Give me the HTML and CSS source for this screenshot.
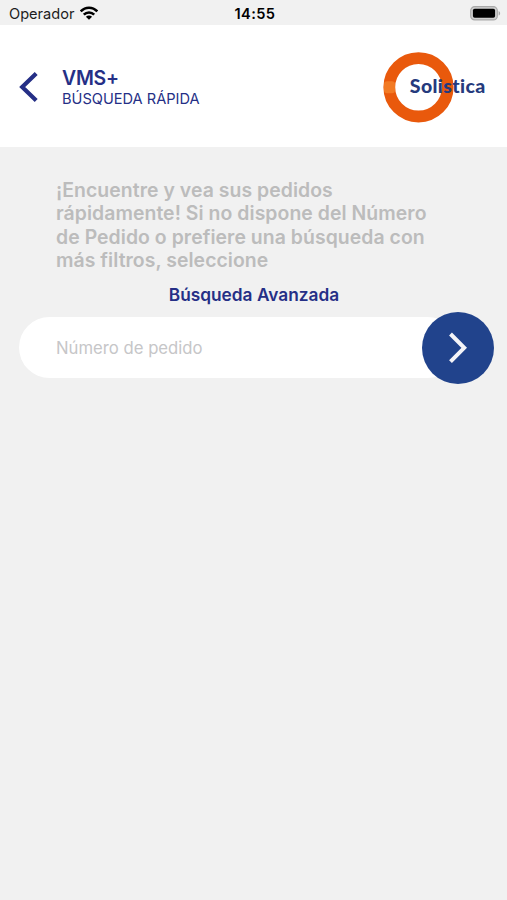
FILE: index.html
```html
<!DOCTYPE html>
<html lang="es">
<head>
  <meta charset="UTF-8">
  <meta name="viewport" content="width=device-width, initial-scale=1">
  <title>VMS+ Búsqueda rápida</title>
  <link rel="stylesheet" href="styles.css">
</head>
<body>

<!-- STATUS BAR -->
<div class="status-bar">
  <div class="carrier">
    <span>Operador</span>
    <svg class="wifi" viewBox="0 0 18 14" width="18" height="14">
      <g fill="none" stroke="#000" stroke-width="2.5">
        <path d="M0.7 5.4 C5.3 0.4 12.7 0.4 17.3 5.4"/>
        <path d="M3.8 8.7 C6.7 5.6 11.3 5.6 14.2 8.7"/>
      </g>
      <path d="M9 13.7 L5.9 10.7 C7.6 9.1 10.4 9.1 12.1 10.7 Z"/>
    </svg>
  </div>
  <div class="clock">14:55</div>
  <svg class="battery" viewBox="0 0 31 15" width="31" height="15">
    <rect x="0.7" y="0.7" width="26.6" height="13.2" rx="4" fill="#d0d0d0" stroke="#a9a9a9" stroke-width="1.2"/>
    <rect x="2.9" y="2.8" width="22.2" height="9" rx="1.8"/>
    <path d="M28.6 5 C30.6 5.8 30.6 8.8 28.6 9.6 Z" fill="#a9a9a9"/>
  </svg>
</div>

<!-- HEADER -->
<header class="header">
  <a class="back" href="#" aria-label="Volver">
    <svg viewBox="0 0 20 32" width="20" height="32">
      <path d="M17.2 2.4 L3.2 16 L17.2 29.6" fill="none" stroke="#252f86" stroke-width="4.2"/>
    </svg>
  </a>
  <div class="titles">
    <h1>VMS+</h1>
    <h2>BÚSQUEDA RÁPIDA</h2>
  </div>
  <svg class="logo" viewBox="0 0 104 72" width="104" height="72">
    <circle cx="35.5" cy="36.3" r="29.2" fill="none" stroke="#e9590c" stroke-width="11.8"/>
    <rect x="1" y="30.3" width="11" height="12" rx="3" fill="#f27a24"/>
    <text class="logo-text" x="26.8" y="41.8" textLength="75.5">Solistica</text>
  </svg>
</header>

<!-- QUICK SEARCH -->
<main class="search">
  <p class="intro">
    ¡Encuentre y vea sus pedidos<br>
    rápidamente! Si no dispone del Número<br>
    de Pedido o prefiere una búsqueda con<br>
    más filtros, seleccione
  </p>
  <a class="advanced" href="#">Búsqueda Avanzada</a>
  <form class="search-form">
    <input type="text" placeholder="Número de pedido">
    <button type="button" aria-label="Buscar">
      <svg viewBox="0 0 20 32" width="20" height="32">
        <path d="M2.5 2 L16.2 15.8 L2.5 29.6" fill="none" stroke="#f4f4f8" stroke-width="4"/>
      </svg>
    </button>
  </form>
</main>

</body>
</html>
```
FILE: styles.css
```css
/* --- Global Styles --- */
* { box-sizing: border-box; }
body { font-family: Inter, sans-serif; background: #f1f1f1; margin: 0; color: #252f86; }
h1, h2, p { margin: 0; }
svg { display: block; }

/* --- Status Bar --- */
.status-bar {
  display: grid;
  grid-template-columns: 1fr auto 1fr;
  align-items: center;
  height: 25px;
  padding: 2px 6px 0 9px;
  font-size: 14.6px;
  color: #1c1c1c;
}
.carrier { display: flex; align-items: center; gap: 6px; }
.wifi { margin-bottom: 2px; }
.clock { font-weight: 600; letter-spacing: 0.4px; color: #000; }
.battery { justify-self: end; }

/* --- Header --- */
.header {
  display: flex;
  align-items: center;
  height: 122px;
  padding: 2px 20px 0 19px;
  background: #fff;
}
.titles { margin-left: 23px; padding-top: 2px; flex: 1; }
.titles h1 { font-size: 19.4px; line-height: 22px; font-weight: 600; letter-spacing: -0.2px; }
.titles h2 { font-size: 14.6px; line-height: 20px; font-weight: 400; }
.logo-text {
  font-family: Lato, sans-serif;
  font-weight: 900;
  font-size: 19.5px;
  font-variant-ligatures: none;
  fill: #253a7d;
}

/* --- Quick Search --- */
.search { padding: 32px 13px 0 19px; }
.intro {
  padding-left: 37px;
  font-size: 19.4px;
  line-height: 23.4px;
  font-weight: 600;
  letter-spacing: 0.06px;
  color: #bcbcbc;
  white-space: nowrap;
}
.advanced {
  display: block;
  margin-top: 11px;
  padding-right: 5px;
  font-size: 17.3px;
  line-height: 22px;
  font-weight: 600;
  text-align: center;
  text-decoration: none;
  color: #252f86;
}
.search-form { display: flex; align-items: center; margin-top: 6px; }
.search-form input {
  flex: 1;
  min-width: 0;
  height: 61px;
  margin-right: -36px;
  padding: 0 37px;
  border: 0;
  border-radius: 31px;
  background: #fff;
  font: 400 16.7px Inter, sans-serif;
}
.search-form input::placeholder { color: #c6c6c8; opacity: 1; }
.search-form button {
  display: flex;
  align-items: center;
  justify-content: center;
  width: 72px;
  height: 72px;
  padding: 0;
  border: 0;
  border-radius: 50%;
  background: #21438c;
  z-index: 1;
}
```
